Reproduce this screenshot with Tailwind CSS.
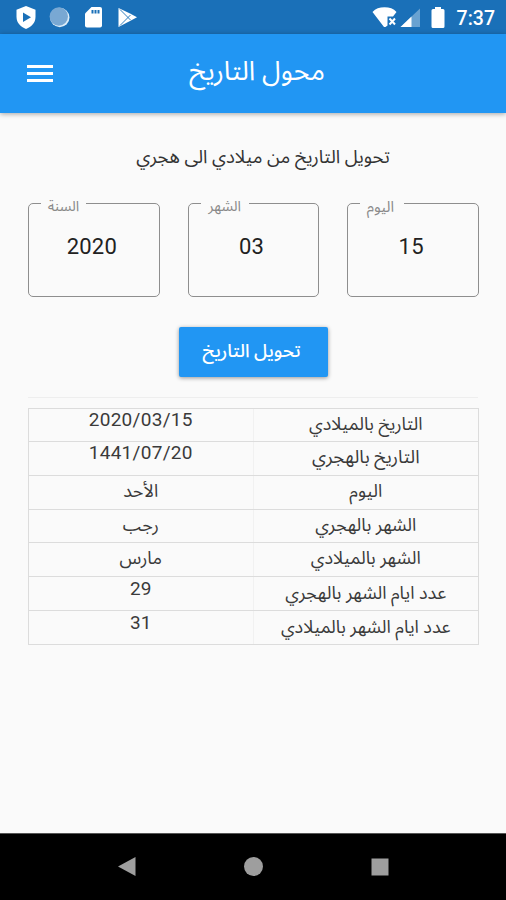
<!DOCTYPE html>
<html lang="ar">
<head>
  <meta charset="UTF-8" />
  <meta name="viewport" content="width=device-width, initial-scale=1.0"/>
  <title>محول التاريخ</title>
  <script src="https://cdn.jsdelivr.net/npm/@tailwindcss/browser@4"></script>
</head>
<body class="bg-[#fafafa] font-['Roboto','Noto_Sans_Arabic','DejaVu_Sans',sans-serif] text-[#212121]">
  <div class="w-[506px] h-[900px] flex flex-col overflow-hidden">

    <!-- Status bar -->
    <div class="h-[34px] shrink-0 bg-[#1a70b8] flex items-center justify-between pl-4 pr-[11px] text-white">
      <svg class="w-[124px] h-[34px]" viewBox="16 0 124 34" fill="currentColor">
        <path d="M26 6l9.500 3.700v7c0 6-4 10-9.500 12.300-5.500-2.300-9.500-6.300-9.500-12.300v-7z"/>
        <path d="M23 12.500v9.500l8-4.700z" fill="#1a70b8"/>
        <circle cx="59.800" cy="17.500" r="9.700" fill="#dcecf8"/>
        <circle cx="58.800" cy="16.500" r="9.200" fill="#79a8d3"/>
        <path d="M91.500 7H100a2 2 0 0 1 2 2v16.500a2 2 0 0 1-2 2H87a2 2 0 0 1-2-2V13.500z"/>
        <path d="M91.500 10h2v3.500h-2zM94.500 10h2v3.500h-2zM97.500 10h2v3.500h-2z" fill="#1a70b8"/>
        <path d="M118.500 8l11 5.300 7.500 4-7.500 4-11 5.700z"/>
        <path d="M120 9.500l10.500 10.500M120 25.500l10.500-10.500" stroke="#1a70b8" stroke-width=".9"/>
      </svg>
      <div class="flex items-center gap-[10px]">
        <svg class="w-[76px] h-[34px]" viewBox="373 0 76 34" fill="currentColor">
          <path d="M374.500 12c3-3.300 7-4.700 12-4.700s9 1.400 12 4.700l-3.500 4.500h-5.500v9l-2 1.500h-1.500z"/>
          <path d="M391.500 18.500l5.500 6M397 18.500l-5.500 6" stroke="currentColor" stroke-width="2"/>
          <path d="M422 8.500v18.500h-19.500z" opacity=".35"/>
          <path d="M413.500 16.600V27h-11z"/>
          <path d="M437 7h6v2h2a1.500 1.500 0 0 1 1.500 1.500v16A1.500 1.500 0 0 1 445 28h-10a1.500 1.500 0 0 1-1.500-1.500v-16A1.500 1.500 0 0 1 435 9h2z"/>
        </svg>
        <span class="pt-[3px] text-[19.500px] leading-[34px] font-medium">7:37</span>
      </div>
    </div>

    <!-- App bar -->
    <header class="relative h-[79px] shrink-0 bg-[#2196f3] shadow-[0_1px_5px_rgba(0,0,0,0.35)] flex items-center justify-center text-white">
      <button class="absolute left-[27px] top-[31px] flex flex-col gap-[4px]" aria-label="القائمة">
        <span class="w-[26px] h-[3px] bg-white"></span>
        <span class="w-[26px] h-[3px] bg-white"></span>
        <span class="w-[26px] h-[3px] bg-white"></span>
      </button>
      <h1 dir="rtl" class="text-[27px] leading-[40px] ml-[8px] mb-[5px]">محول التاريخ</h1>
    </header>

    <!-- Converter -->
    <main class="flex-1 px-7 flex flex-col">
      <h2 dir="rtl" class="mt-[28px] ml-[20px] text-center text-[18.500px] leading-[32px] whitespace-nowrap text-[#333]">تحويل التاريخ من ميلادي الى هجري</h2>

      <div class="mt-[30px] grid grid-cols-3 gap-[28px] w-[451px]">
        <div class="relative h-[94px] border border-[#8e8e8e] rounded-[5px] flex items-center justify-center pb-[8px] pr-[4px] text-[22px] tracking-[0.2px]">
          <span dir="rtl" class="absolute left-[12px] -top-[8px] w-[45px] bg-[#fafafa] text-center text-[14.500px] leading-[22px] tracking-normal text-[#8a8a8a]">السنة</span>
          2020
        </div>
        <div class="relative h-[94px] border border-[#8e8e8e] rounded-[5px] flex items-center justify-center pb-[8px] pr-[4px] text-[22px] tracking-[0.2px]">
          <span dir="rtl" class="absolute left-[12px] -top-[8px] w-[48px] bg-[#fafafa] text-center text-[14.500px] leading-[22px] tracking-normal text-[#8a8a8a]">الشهر</span>
          03
        </div>
        <div class="relative h-[94px] border border-[#8e8e8e] rounded-[5px] flex items-center justify-center pb-[8px] pr-[4px] text-[22px] tracking-[0.2px]">
          <span dir="rtl" class="absolute left-[12px] -top-[8px] w-[44px] pr-1 bg-[#fafafa] text-center text-[15px] leading-[22px] tracking-normal text-[#8a8a8a]">اليوم</span>
          15
        </div>
      </div>

      <button dir="rtl" class="mt-[30px] self-center w-[149px] h-[50px] pb-[1px] pr-[3px] rounded-[2px] bg-[#2196f3] shadow-[0_1px_4px_rgba(0,0,0,0.4)] text-white text-[18.500px] font-medium">تحويل التاريخ</button>

      <div class="mt-[20px] h-px w-[450px] bg-[#eeeeee]"></div>

      <!-- Results -->
      <div class="mt-[10px] w-[451px] h-[237px] border border-[#dcdcdc] divide-y divide-[#dcdcdc] grid grid-rows-[33px_34px_34px_33px_34px_34px_33px] text-[18px] leading-[30px] text-center text-[#3a3a3a]">
        <div class="grid grid-cols-2"><span class="border-r border-[#f1f1f1] text-[19px] leading-[22px] tracking-[0.300px]">2020/03/15</span><span dir="rtl">التاريخ بالميلادي</span></div>
        <div class="grid grid-cols-2"><span class="border-r border-[#f1f1f1] text-[19px] leading-[22px] tracking-[0.300px]">1441/07/20</span><span dir="rtl" class="text-[18.500px]">التاريخ بالهجري</span></div>
        <div class="grid grid-cols-2"><span dir="rtl" class="border-r border-[#f1f1f1]">الأحد</span><span dir="rtl">اليوم</span></div>
        <div class="grid grid-cols-2"><span dir="rtl" class="border-r border-[#f1f1f1]">رجب</span><span dir="rtl">الشهر بالهجري</span></div>
        <div class="grid grid-cols-2"><span dir="rtl" class="border-r border-[#f1f1f1]">مارس</span><span dir="rtl">الشهر بالميلادي</span></div>
        <div class="grid grid-cols-2"><span class="border-r border-[#f1f1f1] text-[19px] leading-[23px]">29</span><span dir="rtl" class="leading-[31px]">عدد ايام الشهر بالهجري</span></div>
        <div class="grid grid-cols-2"><span class="border-r border-[#f1f1f1] text-[19px] leading-[23px]">31</span><span dir="rtl" class="leading-[31px]">عدد ايام الشهر بالميلادي</span></div>
      </div>
    </main>

    <!-- Navigation bar -->
    <nav class="h-[67px] shrink-0 bg-black border-t border-[#555] text-[#9e9e9e]">
      <svg class="w-full h-[66px]" viewBox="0 834 506 66" fill="currentColor">
        <path d="M118 866.500l17.500-9.500v19z"/>
        <circle cx="253.500" cy="866.500" r="9.500"/>
        <path d="M371.500 858.500h17v17h-17z"/>
      </svg>
    </nav>
  </div>
</body>
</html>
